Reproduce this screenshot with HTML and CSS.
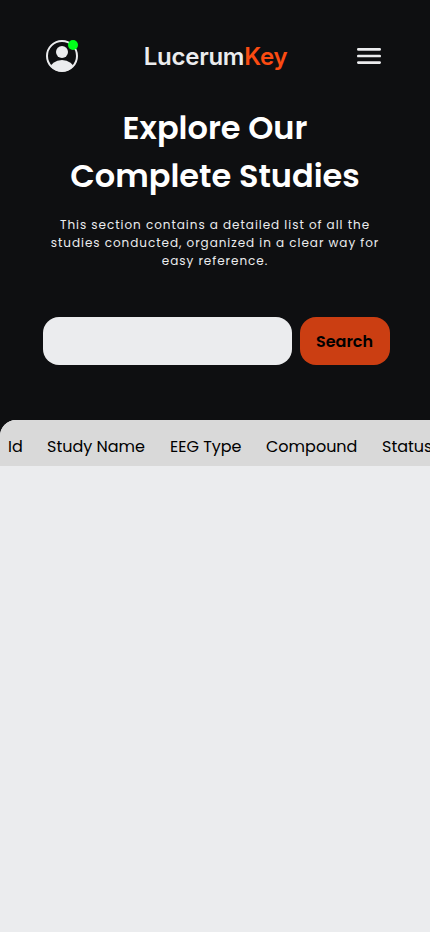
FILE: index.html
```html
<!DOCTYPE html>
<html lang="en">
<head>
<meta charset="utf-8">
<meta name="viewport" content="width=device-width, initial-scale=1">
<title>LucerumKey</title>
<link rel="stylesheet" href="styles.css">
</head>
<body>
<header class="topbar">
  <div class="avatar">
    <svg width="32" height="32" viewBox="0 0 32 32" aria-hidden="true">
      <clipPath id="disc"><circle cx="16" cy="16" r="15.5"/></clipPath>
      <circle cx="16" cy="16" r="15" fill="none" stroke="#ebecee" stroke-width="2"/>
      <circle cx="16" cy="12" r="6" fill="#ebecee"/>
      <ellipse cx="16" cy="29" rx="12" ry="9" fill="#ebecee" clip-path="url(#disc)"/>
    </svg>
    <span class="online"></span>
  </div>
  <div class="logo">Lucerum<span class="logo-key">Key</span></div>
  <svg class="menu" width="24" height="16" viewBox="0 0 24 16" aria-hidden="true">
    <path d="M1.33 1.33H22.67M1.33 8H22.67M1.33 14.67H22.67" stroke="#ebecee" stroke-width="2.67" stroke-linecap="round"/>
  </svg>
</header>
<main>
  <section class="hero">
    <h1 class="title">Explore Our<br>Complete Studies</h1>
    <p class="intro">This section contains a detailed list of all the<br>studies conducted, organized in a clear way for<br>easy reference.</p>
    <form class="search">
      <input class="field" type="text" aria-label="Search">
      <button class="submit" type="button">Search</button>
    </form>
  </section>
  <section class="studies">
    <div class="columns">
      <span>Id</span>
      <span>Study Name</span>
      <span>EEG Type</span>
      <span>Compound</span>
      <span>Status</span>
    </div>
  </section>
</main>
</body>
</html>
```
FILE: styles.css
```css
* { box-sizing: border-box; }
body {
  margin: 0;
  min-height: 932px;
  background: #0e0f11;
  color: #ebecee;
  font-family: Poppins, Inter, sans-serif;
  overflow: hidden;
}
.topbar {
  height: 104px;
  padding: 8px 49px 0 46px;
  display: flex;
  align-items: center;
  justify-content: space-between;
}
.avatar { position: relative; width: 32px; height: 32px; }
.avatar svg { display: block; }
.online {
  position: absolute;
  top: 0;
  right: 0;
  width: 10px;
  height: 10px;
  border-radius: 50%;
  background: #00ff1a;
}
.logo {
  margin-right: 4px;
  padding-top: 2px;
  font: 600 24px/32px Inter, sans-serif;
  letter-spacing: -0.25px;
  white-space: nowrap;
}
.logo-key { color: #fb4b12; }
.hero { height: 316px; text-align: center; }
.title {
  margin: 0;
  font-size: 32px;
  line-height: 48px;
  font-weight: 600;
  color: #fff;
  white-space: nowrap;
}
.intro {
  margin: 16px 0 0;
  font-size: 12px;
  line-height: 18px;
  letter-spacing: 0.96px;
  white-space: nowrap;
}
.search {
  display: flex;
  gap: 8px;
  margin: 47px 40px 0 43px;
}
.field {
  flex: 1;
  min-width: 0;
  height: 48px;
  border: 0;
  border-radius: 16px;
  background: #ebecee;
}
.submit {
  width: 90px;
  height: 48px;
  padding: 1px 1px 0 0;
  border: 0;
  border-radius: 16px;
  background: #cb3e12;
  color: #000;
  font: 600 16px/24px Poppins, Inter, sans-serif;
}
.studies {
  height: 512px;
  background: #ebecee;
  border-radius: 16px 0 0 0;
  overflow: hidden;
}
.columns {
  display: grid;
  grid-template-columns: 39px 123px 96px 116px 80px;
  height: 46px;
  padding: 15px 0 0 8px;
  background: #d9d9d9;
  color: #000;
  font-size: 16px;
  line-height: 24px;
  white-space: nowrap;
}
```
